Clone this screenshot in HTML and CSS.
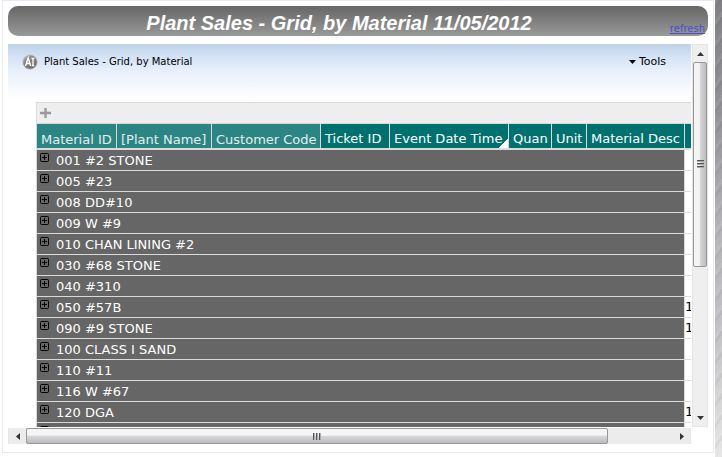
FILE: index.html
```html
<!DOCTYPE html>
<html lang="en">
<head>
<meta charset="utf-8">
<title>Plant Sales - Grid, by Material</title>
<link rel="stylesheet" href="styles.css">
</head>
<body>
<svg class="defs" aria-hidden="true">
  <symbol id="expand" viewBox="0 0 9 9">
    <rect x="0.5" y="0.5" width="8" height="8" rx="1" fill="none" stroke="#000"/>
    <path d="M2 4.500H7M4.500 2V7" stroke="#000"/>
  </symbol>
</svg>
<div class="page">
  <main class="panel">
    <header class="title-bar">
      <h1>Plant Sales - Grid, by Material 11/05/2012</h1>
      <a class="refresh" href="#">refresh</a>
    </header>
    <div class="frame">
      <section class="viewport">
        <div class="report-bar">
          <svg class="logo" viewBox="0 0 16 16" role="img" aria-label="AI">
            <defs><linearGradient id="ball" x1="0" y1="0" x2="0.6" y2="1"><stop offset="0" stop-color="#c4c4c4"/><stop offset="0.45" stop-color="#858585"/><stop offset="1" stop-color="#6c6c6c"/></linearGradient></defs>
            <circle cx="8" cy="8" r="7.300" fill="url(#ball)" stroke="#ccc" stroke-width="0.800"/>
            <path d="M3.500 12L6.200 4L8.700 12M4.500 9.500H8" fill="none" stroke="#fff" stroke-width="1.400"/>
            <path d="M9.500 4.500H12.500M11 4V12M9.800 11.500H12.200" fill="none" stroke="#fff" stroke-width="1.300"/>
          </svg>
          <span class="report-name">Plant Sales - Grid, by Material</span>
          <button class="tools" type="button"><svg viewBox="0 0 7 4" aria-hidden="true"><path d="M0 0H7L3.500 4Z"/></svg>Tools</button>
        </div>
        <div class="grid">
          <div class="grid-bar">
            <button class="add" type="button" aria-label="Add"><svg viewBox="0 0 11 10"><path d="M0 5H11M5.500 0V10" stroke="#999" stroke-width="2.400"/></svg></button>
          </div>
          <table>
            <colgroup>
              <col class="c-material"><col class="c-plant"><col class="c-customer"><col class="c-ticket"><col class="c-date"><col class="c-quan"><col class="c-unit"><col class="c-desc"><col>
            </colgroup>
            <thead>
              <tr><th class="grouped">Material ID</th><th class="grouped">[Plant Name]</th><th class="grouped">Customer Code</th><th>Ticket ID</th><th class="sorted">Event Date Time</th><th>Quan</th><th>Unit</th><th>Material Desc</th><th></th></tr>
            </thead>
            <tbody>
              <tr><td class="group" colspan="8"><button type="button"><svg><use href="#expand"/></svg>001 #2 STONE</button></td><td></td></tr>
              <tr><td class="group" colspan="8"><button type="button"><svg><use href="#expand"/></svg>005 #23</button></td><td></td></tr>
              <tr><td class="group" colspan="8"><button type="button"><svg><use href="#expand"/></svg>008 DD#10</button></td><td></td></tr>
              <tr><td class="group" colspan="8"><button type="button"><svg><use href="#expand"/></svg>009 W #9</button></td><td></td></tr>
              <tr><td class="group" colspan="8"><button type="button"><svg><use href="#expand"/></svg>010 CHAN LINING #2</button></td><td></td></tr>
              <tr><td class="group" colspan="8"><button type="button"><svg><use href="#expand"/></svg>030 #68 STONE</button></td><td></td></tr>
              <tr><td class="group" colspan="8"><button type="button"><svg><use href="#expand"/></svg>040 #310</button></td><td></td></tr>
              <tr><td class="group" colspan="8"><button type="button"><svg><use href="#expand"/></svg>050 #57B</button></td><td>1</td></tr>
              <tr><td class="group" colspan="8"><button type="button"><svg><use href="#expand"/></svg>090 #9 STONE</button></td><td>1</td></tr>
              <tr><td class="group" colspan="8"><button type="button"><svg><use href="#expand"/></svg>100 CLASS I SAND</button></td><td></td></tr>
              <tr><td class="group" colspan="8"><button type="button"><svg><use href="#expand"/></svg>110 #11</button></td><td></td></tr>
              <tr><td class="group" colspan="8"><button type="button"><svg><use href="#expand"/></svg>116 W #67</button></td><td></td></tr>
              <tr><td class="group" colspan="8"><button type="button"><svg><use href="#expand"/></svg>120 DGA</button></td><td>1</td></tr>
              <tr><td class="group" colspan="8"><button type="button" aria-label="Expand"><svg><use href="#expand"/></svg></button></td><td></td></tr>
            </tbody>
          </table>
        </div>
      </section>
      <div class="scroll vertical">
        <button type="button" aria-label="Scroll up"><svg viewBox="0 0 7 4"><path d="M0 4H7L3.500 0Z"/></svg></button>
        <div class="track"><div class="thumb"><i></i></div></div>
        <button type="button" aria-label="Scroll down"><svg viewBox="0 0 7 4"><path d="M0 0H7L3.500 4Z"/></svg></button>
      </div>
      <div class="scroll horizontal">
        <button type="button" aria-label="Scroll left"><svg viewBox="0 0 4 7"><path d="M4 0V7L0 3.500Z"/></svg></button>
        <div class="track"><div class="thumb"><i></i></div></div>
        <button type="button" aria-label="Scroll right"><svg viewBox="0 0 4 7"><path d="M0 0V7L4 3.500Z"/></svg></button>
      </div>
    </div>
  </main>
  <div class="backdrop"></div>
</div>
</body>
</html>
```
FILE: styles.css
```css
* { box-sizing: border-box; }
body { margin: 0; background: #fff; font-family: Verdana, "DejaVu Sans", sans-serif; font-size: 13px; }
button { margin: 0; padding: 0; border: 0; background: none; font: inherit; color: inherit; }
svg { display: block; flex: none; }
.defs { display: none; }

.page { display: flex; height: 100vh; padding-left: 2px; }
.panel {
  flex: 1; min-width: 0; display: flex; flex-direction: column; gap: 8px;
  margin-bottom: 4px; padding: 5px 5px 8px;
  border: 1px solid #e4e9f4;
}
.backdrop {
  width: 7px; margin-left: 1px;
  background:
    repeating-linear-gradient(125deg, rgba(255,255,255,.08) 0 3px, rgba(0,0,0,.04) 3px 6px, transparent 6px 12px),
    linear-gradient(#808084, #929297 25%, #b4b4b8 50%, #c4c4c6 75%, #e6e6e6);
}

.title-bar {
  position: relative; flex: none; height: 30px; border-radius: 10px;
  background: linear-gradient(#666, #999);
}
h1 {
  margin: 0; padding-right: 38px; text-align: center; color: #fff;
  font: italic bold 20px/34px Arial, "Liberation Sans", sans-serif;
}
.refresh { position: absolute; right: 3px; bottom: 1px; font-size: 10px; line-height: 12px; color: #4a4ec8; }

.frame {
  flex: 1; min-height: 0; display: grid; column-gap: 1px; row-gap: 1px;
  grid-template: minmax(0, 1fr) 16px / minmax(0, 1fr) 16px;
}
.viewport {
  overflow: hidden;
  background: linear-gradient(#bfd1e7, #d3e2f5 12px, #e9f0fb 28px, #fff 56px);
}
.report-bar { display: flex; align-items: center; height: 35px; margin-bottom: 23px; padding: 0 25px 0 14px; font-size: 10px; }
.logo { width: 16px; height: 16px; margin-right: 6px; }
.tools { display: flex; align-items: center; gap: 3px; margin-left: auto; font-size: 11px; }
.tools svg { width: 7px; height: 4px; }

.grid { margin-left: 28px; border: 1px solid #dadada; border-right: 0; }
.grid-bar { display: flex; align-items: center; height: 21px; padding: 0 3px; background: #eee; border-bottom: 1px solid #dadada; }
.add svg { width: 11px; height: 10px; }

table { width: 100%; table-layout: fixed; border-collapse: separate; border-spacing: 0; background: #fff; }
.c-material { width: 80px; }
.c-plant { width: 95px; }
.c-customer { width: 109px; }
.c-ticket { width: 69px; }
.c-date { width: 119px; }
.c-quan { width: 43px; }
.c-unit { width: 35px; }
.c-desc { width: 98px; }
th {
  height: 26px; padding: 0 0 1px 4px; overflow: hidden; vertical-align: bottom;
  text-align: left; font-weight: normal; line-height: 17px; white-space: nowrap;
  color: #fff; background: #00716f;
  border-right: 1px solid #dadada; border-bottom: 2px solid #dadada;
}
th.grouped { padding-bottom: 0; line-height: 16px; color: #e4f0ef; background: #2b8583; }
th.sorted { background: linear-gradient(135deg, transparent 50%, #fff 50%) right bottom / 10px 10px no-repeat, #00716f; }
td { height: 21px; padding: 0; overflow: hidden; border-right: 1px solid #dadada; border-bottom: 1px solid #dadada; line-height: 20px; }
th:last-child, td:last-child { border-right: 0; }
td.group { color: #fff; background: #666; }
.group button { display: flex; gap: 7px; width: 100%; height: 20px; padding: 3px 0 0 3px; line-height: 16px; text-align: left; }
.group svg { width: 9px; height: 9px; }

.scroll { display: flex; background: #ececec; border: 1px solid #e4e4e4; }
.scroll button { flex: none; display: grid; place-items: center; }
.scroll path { fill: #333; }
.vertical { flex-direction: column; background: #efefef; }
.vertical button { height: 17px; }
.vertical svg { width: 7px; height: 4px; }
.horizontal { border-width: 0 1px; }
.horizontal button { width: 17px; }
.horizontal svg { width: 4px; height: 7px; }
.track { flex: 1; display: flex; }
.vertical .track { flex-direction: column; }
.thumb { display: flex; align-items: center; justify-content: center; border: 1px solid #979797; border-radius: 2px; }
.vertical .thumb { height: 59%; background: linear-gradient(90deg, #f5f5f5 45%, #d8d8da 50%, #bcbcc0); }
.horizontal .thumb { width: 90%; background: linear-gradient(#f5f5f5 45%, #d8d8da 50%, #bcbcc0); }
.thumb i { width: 7px; height: 8px; background: repeating-linear-gradient(#555 0 1px, #aaa 1px 2px, transparent 2px 3px); }
.horizontal i { width: 8px; height: 7px; background: repeating-linear-gradient(90deg, #555 0 1px, #aaa 1px 2px, transparent 2px 3px); }
```
